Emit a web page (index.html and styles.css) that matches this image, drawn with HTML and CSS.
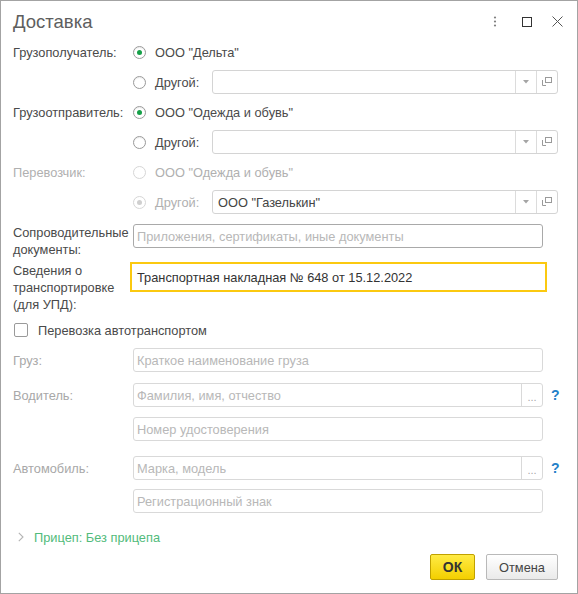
FILE: index.html
```html
<!DOCTYPE html>
<html lang="ru">
<head>
<meta charset="utf-8">
<title>Доставка</title>
<link rel="stylesheet" href="styles.css">
</head>
<body>
<div class="window">
  <div class="header">
    <div class="title">Доставка</div>
    <div class="hicons">
      <svg class="kebab" width="4" height="14" viewBox="0 0 4 14"><circle cx="2" cy="2.5" r="1.1" fill="#808080"/><circle cx="2" cy="6.5" r="1.1" fill="#808080"/><circle cx="2" cy="10.5" r="1.1" fill="#808080"/></svg>
      <svg class="max" width="10" height="10" viewBox="0 0 10 10"><rect x="0.5" y="0.5" width="9" height="9" fill="none" stroke="#333"/></svg>
      <svg class="close" width="11" height="11" viewBox="0 0 11 11"><path d="M0.5 0.5L10.5 10.5M10.5 0.5L0.5 10.5" stroke="#555" stroke-width="1"/></svg>
    </div>
  </div>

  <div class="row">
    <div class="label">Грузополучатель:</div>
    <span class="radio checked"></span><span class="opt">ООО "Дельта"</span>
  </div>
  <div class="row">
    <div class="label"></div>
    <span class="radio"></span><span class="opt other">Другой:</span>
    <div class="combo">
      <div class="ctext"></div>
      <div class="cbtn drop"><svg width="6" height="4" viewBox="0 0 6 4"><polygon points="0,0 6,0 3,3.5" fill="#a5a5a5"/></svg></div>
      <div class="cbtn open"><svg width="10" height="9" viewBox="0 0 10 9"><rect x="3.5" y="0.5" width="6" height="5" fill="none" stroke="#9a9a9a"/><path d="M0.5 3V8.5H4" fill="none" stroke="#9a9a9a"/></svg></div>
    </div>
  </div>
  <div class="row">
    <div class="label">Грузоотправитель:</div>
    <span class="radio checked"></span><span class="opt">ООО "Одежда и обувь"</span>
  </div>
  <div class="row">
    <div class="label"></div>
    <span class="radio"></span><span class="opt other">Другой:</span>
    <div class="combo">
      <div class="ctext"></div>
      <div class="cbtn drop"><svg width="6" height="4" viewBox="0 0 6 4"><polygon points="0,0 6,0 3,3.5" fill="#a5a5a5"/></svg></div>
      <div class="cbtn open"><svg width="10" height="9" viewBox="0 0 10 9"><rect x="3.5" y="0.5" width="6" height="5" fill="none" stroke="#9a9a9a"/><path d="M0.5 3V8.5H4" fill="none" stroke="#9a9a9a"/></svg></div>
    </div>
  </div>
  <div class="row disabled">
    <div class="label">Перевозчик:</div>
    <span class="radio"></span><span class="opt">ООО "Одежда и обувь"</span>
  </div>
  <div class="row disabled">
    <div class="label"></div>
    <span class="radio checked"></span><span class="opt other">Другой:</span>
    <div class="combo">
      <div class="ctext value">ООО "Газелькин"</div>
      <div class="cbtn drop"><svg width="6" height="4" viewBox="0 0 6 4"><polygon points="0,0 6,0 3,3.5" fill="#a5a5a5"/></svg></div>
      <div class="cbtn open"><svg width="10" height="9" viewBox="0 0 10 9"><rect x="3.5" y="0.5" width="6" height="5" fill="none" stroke="#9a9a9a"/><path d="M0.5 3V8.5H4" fill="none" stroke="#9a9a9a"/></svg></div>
    </div>
  </div>

  <div class="frow docs">
    <div class="label ml">Сопроводительные<br>документы:</div>
    <div class="input dark"><span class="ph">Приложения, сертификаты, иные документы</span></div>
  </div>
  <div class="frow transport">
    <div class="label ml">Сведения о<br>транспортировке<br>(для УПД):</div>
    <div class="input focus"><span class="val">Транспортная накладная № 648 от 15.12.2022</span></div>
  </div>

  <div class="crow">
    <span class="check"></span><span class="ctext2">Перевозка автотранспортом</span>
  </div>

  <div class="frow dis r-cargo">
    <div class="label">Груз:</div>
    <div class="input"><span class="ph">Краткое наименование груза</span></div>
  </div>
  <div class="frow dis r-driver">
    <div class="label">Водитель:</div>
    <div class="input sel"><span class="ph">Фамилия, имя, отчество</span><span class="dots">...</span></div>
    <span class="help">?</span>
  </div>
  <div class="frow dis r-license">
    <div class="label"></div>
    <div class="input"><span class="ph">Номер удостоверения</span></div>
  </div>
  <div class="frow dis r-car">
    <div class="label">Автомобиль:</div>
    <div class="input sel"><span class="ph">Марка, модель</span><span class="dots">...</span></div>
    <span class="help">?</span>
  </div>
  <div class="frow dis r-plate">
    <div class="label"></div>
    <div class="input"><span class="ph">Регистрационный знак</span></div>
  </div>

  <div class="trailer">
    <svg width="6" height="10" viewBox="0 0 6 10"><polyline points="0.8,0.8 5,5 0.8,9.2" fill="none" stroke="#b4b4b4" stroke-width="1.1"/></svg>
    <span>Прицеп: Без прицепа</span>
  </div>

  <div class="buttons">
    <div class="btn ok">ОК</div>
    <div class="btn cancel">Отмена</div>
  </div>
</div>
</body>
</html>
```

FILE: styles.css
```css
html, body {
  margin: 0;
  padding: 0;
  background: #fff;
}

.window {
  width: 578px;
  height: 594px;
  box-sizing: border-box;
  border: 1px solid #a3a3a3;
  background: #fff;
  padding-left: 12px;
  font-family: "Liberation Sans", Arial, sans-serif;
  font-size: 12.8px;
  color: #4a4a4a;
}

.header {
  height: 36px;
  box-sizing: border-box;
  padding-top: 5px;
  padding-right: 14px;
  display: flex;
  align-items: center;
}

.title {
  font-size: 18.5px;
  color: #5e5e5e;
}

.hicons {
  margin-left: auto;
  display: flex;
  align-items: center;
}

.kebab { margin-right: 25px; }
.max { margin-right: 20px; }

.row {
  height: 30px;
  display: flex;
  align-items: center;
}

.label {
  width: 120px;
  flex: none;
}

.radio {
  width: 13px;
  height: 13px;
  box-sizing: border-box;
  border: 1px solid #9a9a9a;
  border-radius: 50%;
  background: #fff;
  margin-right: 9px;
  flex: none;
  display: flex;
  align-items: center;
  justify-content: center;
  box-shadow: inset 0 1px 1px rgba(0,0,0,0.08);
}

.radio.checked::after {
  content: "";
  width: 5px;
  height: 5px;
  border-radius: 50%;
  background: #16a048;
}

.opt.other {
  width: 57px;
  flex: none;
}

.disabled .label,
.disabled .opt {
  color: #b0b0b0;
}

.disabled .radio {
  border-color: #d6d6d6;
  box-shadow: none;
}

.disabled .radio.checked::after {
  background: #cfcfcf;
}

.combo {
  width: 346px;
  height: 24px;
  box-sizing: border-box;
  border: 1px solid #d4d4d4;
  border-radius: 3px;
  display: flex;
}

.ctext {
  flex: 1;
  display: flex;
  align-items: center;
  padding-left: 5px;
}

.ctext.value {
  color: #444;
}

.cbtn {
  flex: none;
  border-left: 1px solid #dcdcdc;
  display: flex;
  align-items: center;
  justify-content: center;
}

.cbtn.drop { width: 20px; }
.cbtn.open { width: 21px; padding-bottom: 2px; box-sizing: border-box; }

.frow {
  display: flex;
  align-items: flex-start;
}

.label.ml {
  line-height: 17px;
}

.docs { margin-top: 7px; }
.transport { margin-top: 4px; }

.input {
  width: 410px;
  height: 24px;
  box-sizing: border-box;
  border: 1px solid #d9d9d9;
  border-radius: 3px;
  display: flex;
  align-items: center;
  padding-left: 3px;
  flex: none;
}

.input.dark {
  border-color: #a9a9a9;
}

.ph {
  color: #b8b8b8;
}

.transport .label { width: 117px; }

.input.focus {
  width: 417px;
  height: 30px;
  border: 2px solid #fbc910;
  border-radius: 0;
  padding-left: 5px;
}

.val {
  color: #333;
}

.crow {
  margin-top: 5px;
  height: 24px;
  display: flex;
  align-items: center;
}

.check {
  width: 14px;
  height: 14px;
  box-sizing: border-box;
  border: 1px solid #9a9a9a;
  border-radius: 2px;
  margin-left: 1px;
  margin-right: 10px;
  background: #fff;
}

.ctext2 { color: #4a4a4a; }

.dis .label {
  color: #a8a8a8;
  align-self: center;
}

.r-cargo { margin-top: 6px; }
.r-driver { margin-top: 11px; }
.r-license { margin-top: 10px; }
.r-car { margin-top: 15px; }
.r-plate { margin-top: 9px; }

.input.sel .ph { flex: 1; }

.dots {
  width: 21px;
  height: 100%;
  flex: none;
  border-left: 1px solid #d9d9d9;
  color: #a8a8a8;
  font-size: 11px;
  display: flex;
  align-items: center;
  justify-content: center;
  padding-top: 3px;
  box-sizing: border-box;
}

.help {
  margin-left: 8px;
  align-self: center;
  color: #2480c8;
  font-weight: bold;
  font-size: 14px;
}

.trailer {
  margin-top: 13px;
  height: 22px;
  display: flex;
  align-items: center;
  padding-left: 5px;
  color: #52bb7b;
}

.trailer svg {
  margin-right: 10px;
}

.buttons {
  margin-top: 6px;
  padding-right: 19px;
  display: flex;
  justify-content: flex-end;
  gap: 11px;
}

.btn {
  height: 26px;
  box-sizing: border-box;
  border-radius: 2px;
  display: flex;
  align-items: center;
  justify-content: center;
}

.btn.ok {
  width: 45px;
  background: linear-gradient(#ffeb45, #f3cf00);
  border: 1px solid #c0a100;
  font-weight: bold;
  font-size: 14px;
  color: #333;
}

.btn.cancel {
  width: 72px;
  background: linear-gradient(#ffffff, #eaeaea);
  border: 1px solid #b9b9b9;
  color: #444;
}
```
